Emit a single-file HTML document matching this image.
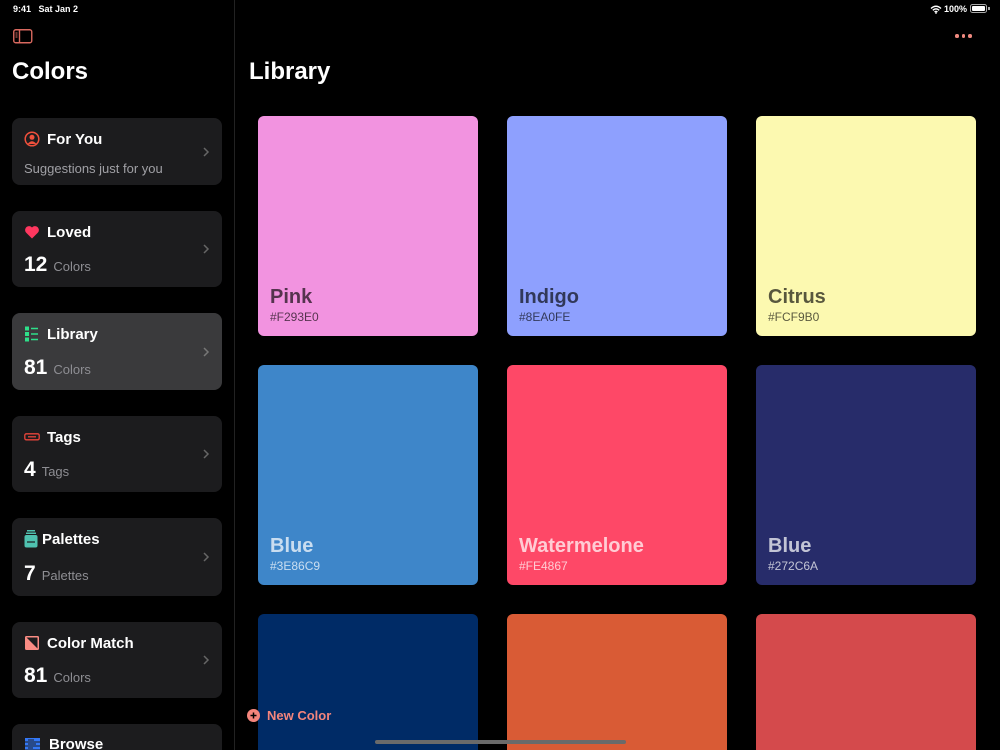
<!DOCTYPE html>
<html style="width:1000px;height:750px;overflow:hidden"><head><meta charset="utf-8"><style>
*{margin:0;padding:0;box-sizing:border-box}
body{width:1000px;height:750px;background:#000;font-family:"Liberation Sans",sans-serif;color:#fff;position:relative;overflow:hidden}
.abs{position:absolute}
.card{position:absolute;left:12px;width:210px;background:#1c1c1e;border-radius:8px}
.card .t{position:absolute;left:35px;top:13px;font-size:15px;font-weight:bold}
.card .n{position:absolute;left:12px;bottom:10px;font-size:21px;font-weight:bold}
.card .n span{font-size:13px;font-weight:normal;color:#8e8e93;margin-left:6px}
.card .ch{position:absolute;right:12px;top:50%;margin-top:-7px;width:8px;height:14px}
.card .ic{position:absolute;left:12px;top:13px;width:16px;height:16px}
.sw{position:absolute;width:220px;height:220px;border-radius:6px}
.sw .nm{position:absolute;left:12px;top:170px;font-size:20px;font-weight:bold}
.sw .hx{position:absolute;left:12px;top:194px;font-size:12px}
.dk{color:rgba(0,0,0,.65)}
.lt{color:rgba(255,255,255,.72)}
</style></head><body>
<div class="abs" style="left:13px;top:4px;font-size:9px;font-weight:bold">9:41&nbsp;&nbsp;&nbsp;Sat Jan 2</div>
<div class="abs" style="left:944px;top:4px;font-size:9px;font-weight:bold">100%</div>
<svg class="abs" style="left:930px;top:5px" width="12" height="9" viewBox="0 0 12 9"><path d="M1 3.5Q6-1 11 3.5M2.8 5.3Q6 2.5 9.2 5.3M4.5 7Q6 5.8 7.5 7" stroke="#fff" stroke-width="1.4" fill="none"/><circle cx="6" cy="8" r="0.9" fill="#fff"/></svg>
<div class="abs" style="left:970px;top:4px;width:17px;height:9px;border:1px solid #aaa;border-radius:2.5px;padding:1px"><div style="background:#fff;width:100%;height:100%;border-radius:1px"></div></div>
<div class="abs" style="left:988px;top:7px;width:1.5px;height:3px;background:#aaa"></div>
<svg class="abs" style="left:13px;top:29px" width="20" height="15" viewBox="0 0 20 15"><rect x="0.75" y="0.75" width="18" height="13" rx="2" fill="none" stroke="#d9695f" stroke-width="1.4"/><line x1="6.5" y1="1" x2="6.5" y2="14" stroke="#d9695f" stroke-width="1.4"/><path d="M2.5 4h2M2.5 6h2M2.5 8h2" stroke="#d9695f" stroke-width="1"/></svg>
<div class="abs" style="left:955px;top:34px;display:flex;gap:3px"><i style="width:3.5px;height:3.5px;border-radius:50%;background:#f08a80"></i><i style="width:3.5px;height:3.5px;border-radius:50%;background:#f08a80"></i><i style="width:3.5px;height:3.5px;border-radius:50%;background:#f08a80"></i></div>
<div class="abs" style="left:12px;top:58px;font-size:24px;font-weight:bold">Colors</div>
<div class="abs" style="left:249px;top:58px;font-size:24px;font-weight:bold">Library</div>
<div class="abs" style="left:234px;top:0;width:1px;height:750px;background:#222"></div>

<div class="card" style="top:118px;height:67px"><svg class="ic" viewBox="0 0 16 16"><circle cx="8" cy="8" r="6.8" fill="none" stroke="#f0503c" stroke-width="1.5"/><circle cx="8" cy="6.3" r="2.5" fill="#f0503c"/><path d="M3.6 13Q8 7.5 12.4 13" fill="#f0503c"/></svg><div class="t">For You</div><div class="abs" style="left:12px;top:43px;font-size:13px;color:#a0a0a5">Suggestions just for you</div><svg class="ch" viewBox="0 0 8 14"><path d="M2 3l4 4-4 4" stroke="#666" stroke-width="1.5" fill="none"/></svg></div>

<div class="card" style="top:211px;height:76px"><svg class="ic" viewBox="0 0 16 16"><path d="M8 14.5L2 8.5A3.5 3.5 0 0 1 8 3.5A3.5 3.5 0 0 1 14 8.5Z" fill="#ff375f"/></svg><div class="t">Loved</div><div class="n">12<span>Colors</span></div><svg class="ch" viewBox="0 0 8 14"><path d="M2 3l4 4-4 4" stroke="#666" stroke-width="1.5" fill="none"/></svg></div>

<div class="card" style="top:313px;height:77px;background:#3a3a3c"><svg class="ic" viewBox="0 0 16 16"><rect x="1" y="0.5" width="4" height="4" fill="#2ee08a"/><rect x="1" y="6" width="4" height="4" fill="#2ee08a"/><rect x="1" y="11.5" width="4" height="4" fill="#2ee08a"/><path d="M7 2.5h7M7 8h7M7 13.5h7" stroke="#2ee08a" stroke-width="1.4"/></svg><div class="t">Library</div><div class="n">81<span>Colors</span></div><svg class="ch" viewBox="0 0 8 14"><path d="M2 3l4 4-4 4" stroke="#777" stroke-width="1.5" fill="none"/></svg></div>

<div class="card" style="top:416px;height:76px"><svg class="ic" viewBox="0 0 16 16"><rect x="0.8" y="4.8" width="14.4" height="6" rx="1.5" fill="none" stroke="#e8443a" stroke-width="1.3"/><path d="M4 7.8h8" stroke="#e8443a" stroke-width="1.3"/></svg><div class="t">Tags</div><div class="n">4<span>Tags</span></div><svg class="ch" viewBox="0 0 8 14"><path d="M2 3l4 4-4 4" stroke="#666" stroke-width="1.5" fill="none"/></svg></div>

<div class="card" style="top:518px;height:78px"><svg class="ic" style="top:12px;left:11px;height:18px" viewBox="0 0 14 18"><rect x="3" y="0" width="8" height="1.5" fill="#4fc2b0"/><rect x="2" y="2.5" width="10" height="1.5" fill="#4fc2b0"/><rect x="0.5" y="5" width="13" height="12.5" rx="2" fill="#4fc2b0"/><path d="M3 12h8" stroke="#1c1c1e" stroke-width="1.2"/></svg><div class="t" style="left:30px">Palettes</div><div class="n">7<span>Palettes</span></div><svg class="ch" viewBox="0 0 8 14"><path d="M2 3l4 4-4 4" stroke="#666" stroke-width="1.5" fill="none"/></svg></div>

<div class="card" style="top:622px;height:76px"><svg class="ic" viewBox="0 0 16 16"><rect x="1" y="1" width="14" height="14" rx="1.5" fill="#fa8c84"/><path d="M2.5 2.5h11v11Z" fill="#1c1c1e"/></svg><div class="t">Color Match</div><div class="n">81<span>Colors</span></div><svg class="ch" viewBox="0 0 8 14"><path d="M2 3l4 4-4 4" stroke="#666" stroke-width="1.5" fill="none"/></svg></div>

<div class="card" style="top:724px;height:26px;border-radius:8px 8px 0 0"><svg class="ic" viewBox="0 0 16 16"><rect x="1" y="1" width="15" height="15" fill="#3478f6"/><path d="M1 5h15M1 9h15M1 13h15M4 3h6M4 7h8M4 11h5" stroke="#1c1c1e" stroke-width="1"/></svg><div class="t" style="left:37px;top:12px">Browse</div></div>

<div class="sw" style="left:258px;top:116px;background:#f293e0"><div class="nm dk">Pink</div><div class="hx dk">#F293E0</div></div>
<div class="sw" style="left:507px;top:116px;background:#8ea0fe"><div class="nm dk">Indigo</div><div class="hx dk">#8EA0FE</div></div>
<div class="sw" style="left:756px;top:116px;background:#fcf9b0"><div class="nm dk">Citrus</div><div class="hx dk">#FCF9B0</div></div>
<div class="sw" style="left:258px;top:365px;background:#3e86c9"><div class="nm lt">Blue</div><div class="hx lt">#3E86C9</div></div>
<div class="sw" style="left:507px;top:365px;background:#fe4867"><div class="nm lt">Watermelone</div><div class="hx lt">#FE4867</div></div>
<div class="sw" style="left:756px;top:365px;background:#272c6a"><div class="nm lt">Blue</div><div class="hx lt">#272C6A</div></div>
<div class="sw" style="left:258px;top:614px;height:136px;border-radius:6px 6px 0 0;background:#002b66"></div>
<div class="sw" style="left:507px;top:614px;height:136px;border-radius:6px 6px 0 0;background:#d95b35"></div>
<div class="sw" style="left:756px;top:614px;height:136px;border-radius:6px 6px 0 0;background:#d44a4c"></div>

<svg class="abs" style="left:247px;top:709px" width="13" height="13" viewBox="0 0 13 13"><circle cx="6.5" cy="6.5" r="6.5" fill="#f4857c"/><path d="M6.5 3.5v6M3.5 6.5h6" stroke="#000" stroke-width="1.5"/></svg>
<div class="abs" style="left:267px;top:708px;font-size:13px;font-weight:bold;color:#f4857c">New Color</div>
<div class="abs" style="left:375px;top:740px;width:251px;height:4px;border-radius:2px;background:#6a6a6a"></div>
</body></html>
